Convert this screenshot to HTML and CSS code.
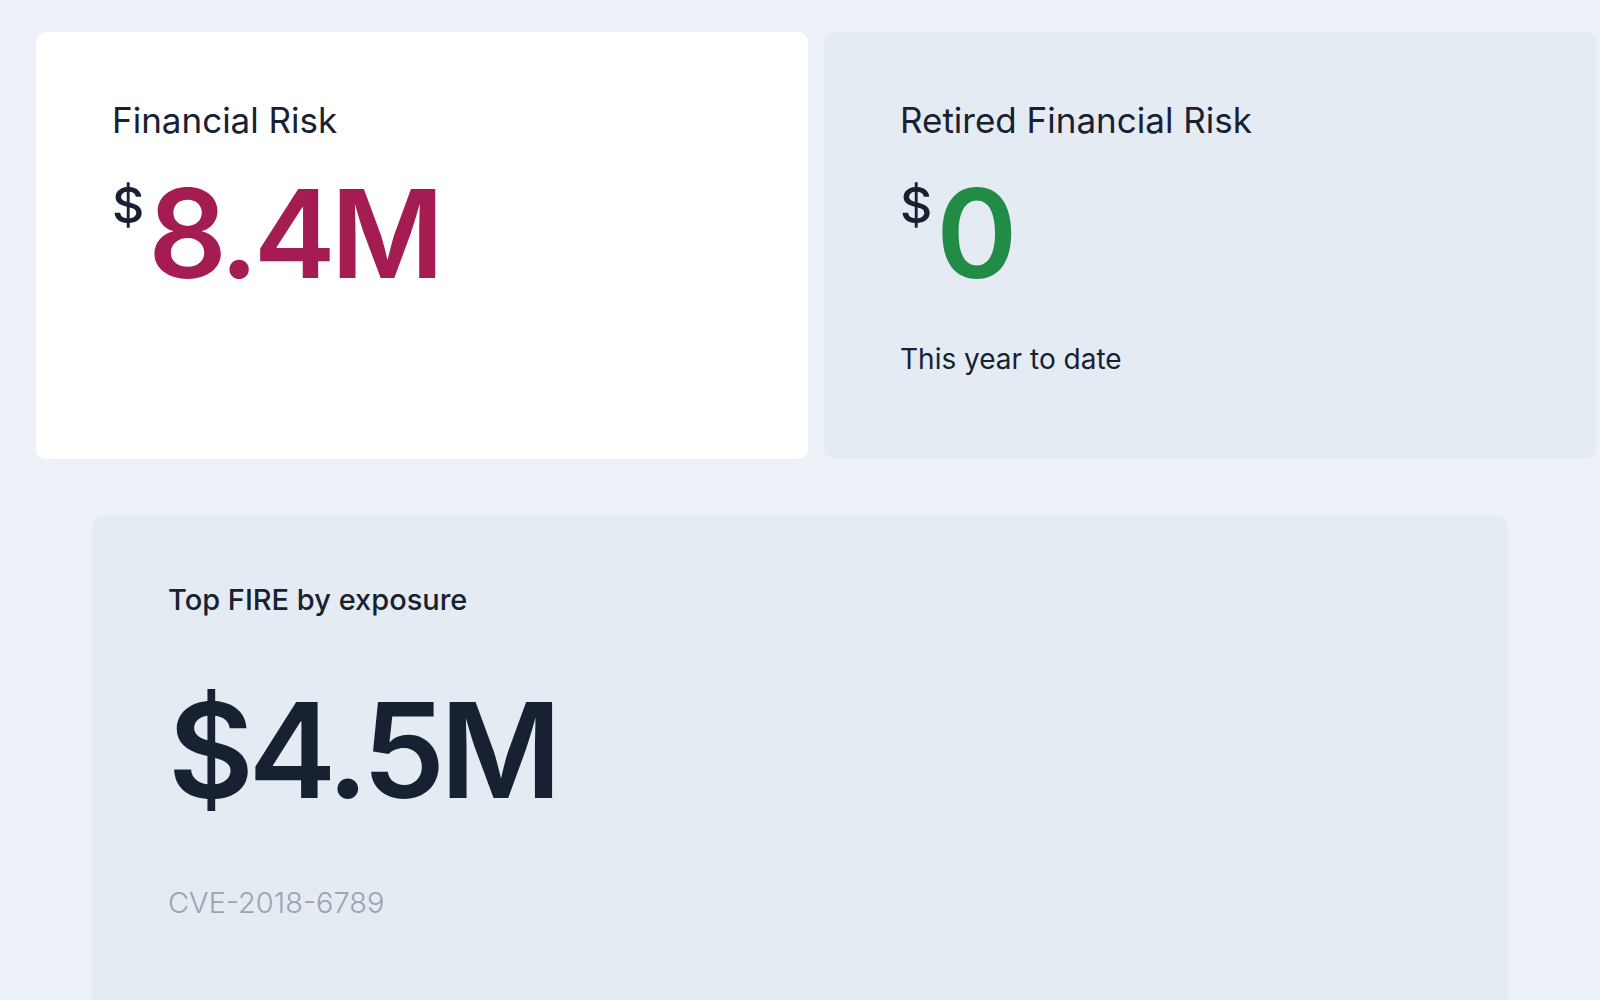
FILE: index.html
```html
<!DOCTYPE html>
<html lang="en">
<head>
  <meta charset="UTF-8">
  <meta name="viewport" content="width=device-width, initial-scale=1.0">
  <title>Risk Overview</title>
  <link rel="stylesheet" href="styles.css">
</head>
<body>
  <div class="top-row">
    <div class="card card-white">
      <h3 class="card-title">Financial Risk</h3>
      <div class="amount">
        <span class="currency">$</span>
        <span class="value value-risk">8.4M</span>
      </div>
    </div>

    <div class="card card-muted">
      <h3 class="card-title">Retired Financial Risk</h3>
      <div class="amount">
        <span class="currency">$</span>
        <span class="value value-retired">0</span>
      </div>
      <div class="card-note">This year to date</div>
    </div>
  </div>

  <div class="card card-muted card-wide">
    <h4 class="wide-title">Top FIRE by exposure</h4>
    <div class="wide-value">$4.5M</div>
    <div class="wide-sub">CVE-2018-6789</div>
  </div>
</body>
</html>
```

FILE: styles.css
```css
body {
  margin: 0;
  font-family: 'Inter', 'Roboto', sans-serif;
  background-color: #edf1f8;
  color: #172131;
  overflow: hidden;
}
.top-row {
  display: grid;
  grid-template-columns: 772px 772px;
  gap: 16px;
  padding: 32px 0 0 36px;
}
.card {
  border-radius: 10px;
  padding: 66px 76px 0 76px;
  box-sizing: border-box;
}
.top-row .card {
  height: 427px;
}
.card-white {
  background: #ffffff;
}
.card-muted {
  background: #e5ebf3;
}
.card-title {
  margin: 0;
  font-size: 35px;
  line-height: 44px;
  font-weight: 400;
}
.amount {
  display: flex;
  align-items: flex-start;
  margin-top: 26px;
}
.currency {
  font-size: 50px;
  line-height: 50px;
  font-weight: 500;
  margin-top: 12px;
  margin-right: 4px;
}
.value {
  margin-top: 4px;
  font-size: 123px;
  line-height: 123px;
  font-weight: 600;
  letter-spacing: -0.04em;
}
.value-risk {
  color: #a51c52;
}
.value-retired {
  color: #218c46;
}
.card-note {
  margin-top: 46px;
  font-size: 28px;
  line-height: 36px;
}
.card-wide {
  width: 1416px;
  margin: 57px 0 0 92px;
  min-height: 600px;
}
.wide-title {
  margin: 0;
  font-size: 29px;
  line-height: 36px;
  font-weight: 500;
}
.wide-value {
  margin-top: 66px;
  font-size: 132px;
  line-height: 132px;
  font-weight: 600;
  letter-spacing: -0.04em;
}
.wide-sub {
  margin-top: 69px;
  font-size: 29px;
  line-height: 36px;
  font-weight: 300;
  color: #9ca3af;
}
```
